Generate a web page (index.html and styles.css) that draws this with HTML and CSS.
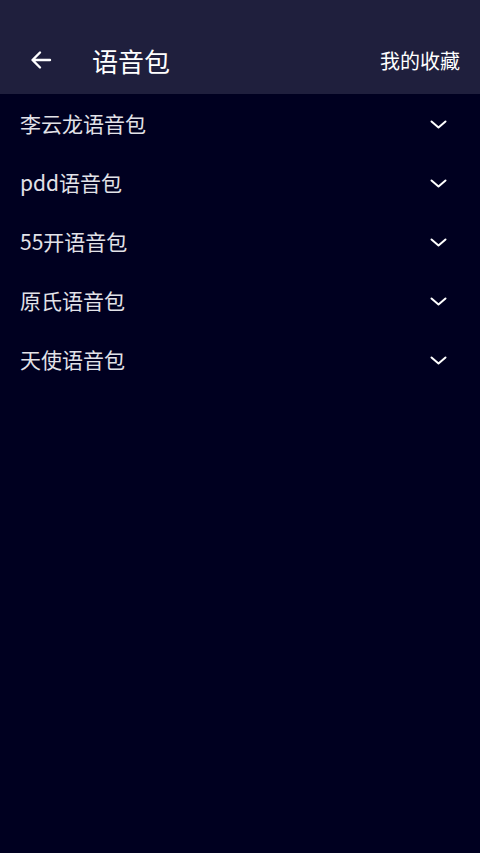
FILE: index.html
```html
<!DOCTYPE html>
<html lang="zh-CN">
<head>
    <meta charset="UTF-8">
    <meta name="viewport" content="width=device-width, initial-scale=1.0">
    <title>语音包</title>
    <link rel="stylesheet" href="styles.css">
</head>
<body>

<header class="topbar">
    <a class="back" href="#">
        <svg width="24" height="24" viewBox="0 0 24 24">
            <path d="M21 12H4M11 4.5L3.5 12L11 19.5" fill="none" stroke="#fff" stroke-width="2.4" stroke-linecap="round" stroke-linejoin="round"/>
        </svg>
    </a>
    <h1 class="title">语音包</h1>
    <a class="fav" href="#">我的收藏</a>
</header>

<ul class="pack-list">
    <li class="pack"><span>李云龙语音包</span><svg class="chev" width="17" height="9" viewBox="0 0 17 9"><path d="M1.5 1.5L8.5 7.5L15.5 1.5" fill="none" stroke="#fff" stroke-width="2" stroke-linecap="round" stroke-linejoin="round"/></svg></li>
    <li class="pack"><span>pdd语音包</span><svg class="chev" width="17" height="9" viewBox="0 0 17 9"><path d="M1.5 1.5L8.5 7.5L15.5 1.5" fill="none" stroke="#fff" stroke-width="2" stroke-linecap="round" stroke-linejoin="round"/></svg></li>
    <li class="pack"><span>55开语音包</span><svg class="chev" width="17" height="9" viewBox="0 0 17 9"><path d="M1.5 1.5L8.5 7.5L15.5 1.5" fill="none" stroke="#fff" stroke-width="2" stroke-linecap="round" stroke-linejoin="round"/></svg></li>
    <li class="pack"><span>原氏语音包</span><svg class="chev" width="17" height="9" viewBox="0 0 17 9"><path d="M1.5 1.5L8.5 7.5L15.5 1.5" fill="none" stroke="#fff" stroke-width="2" stroke-linecap="round" stroke-linejoin="round"/></svg></li>
    <li class="pack"><span>天使语音包</span><svg class="chev" width="17" height="9" viewBox="0 0 17 9"><path d="M1.5 1.5L8.5 7.5L15.5 1.5" fill="none" stroke="#fff" stroke-width="2" stroke-linecap="round" stroke-linejoin="round"/></svg></li>
</ul>

</body>
</html>
```

FILE: styles.css
```css
html, body {
    height: 100%;
}
body {
    font-family: "Noto Sans CJK SC", "Noto Sans", sans-serif;
    background-color: #000020;
    color: #e2e2e8;
    margin: 0;
    padding: 0;
}
.topbar {
    display: flex;
    align-items: center;
    height: 94px;
    padding: 26px 20px 0 29px;
    box-sizing: border-box;
    background-color: #1f1f3d;
}
.back {
    display: flex;
    width: 24px;
    height: 24px;
}
.title {
    margin: 0 0 0 39px;
    font-size: 26px;
    font-weight: normal;
    color: #fff;
    flex: 1;
}
.fav {
    color: #fff;
    font-size: 20px;
    text-decoration: none;
}
.pack-list {
    list-style-type: none;
    margin: 0;
    padding: 0;
}
.pack {
    display: flex;
    align-items: center;
    justify-content: space-between;
    height: 59px;
    padding: 0 33px 0 20px;
    font-size: 21px;
}
.pack span {
    margin-top: -1px;
}
.chev {
    margin-top: 1px;
}
```
